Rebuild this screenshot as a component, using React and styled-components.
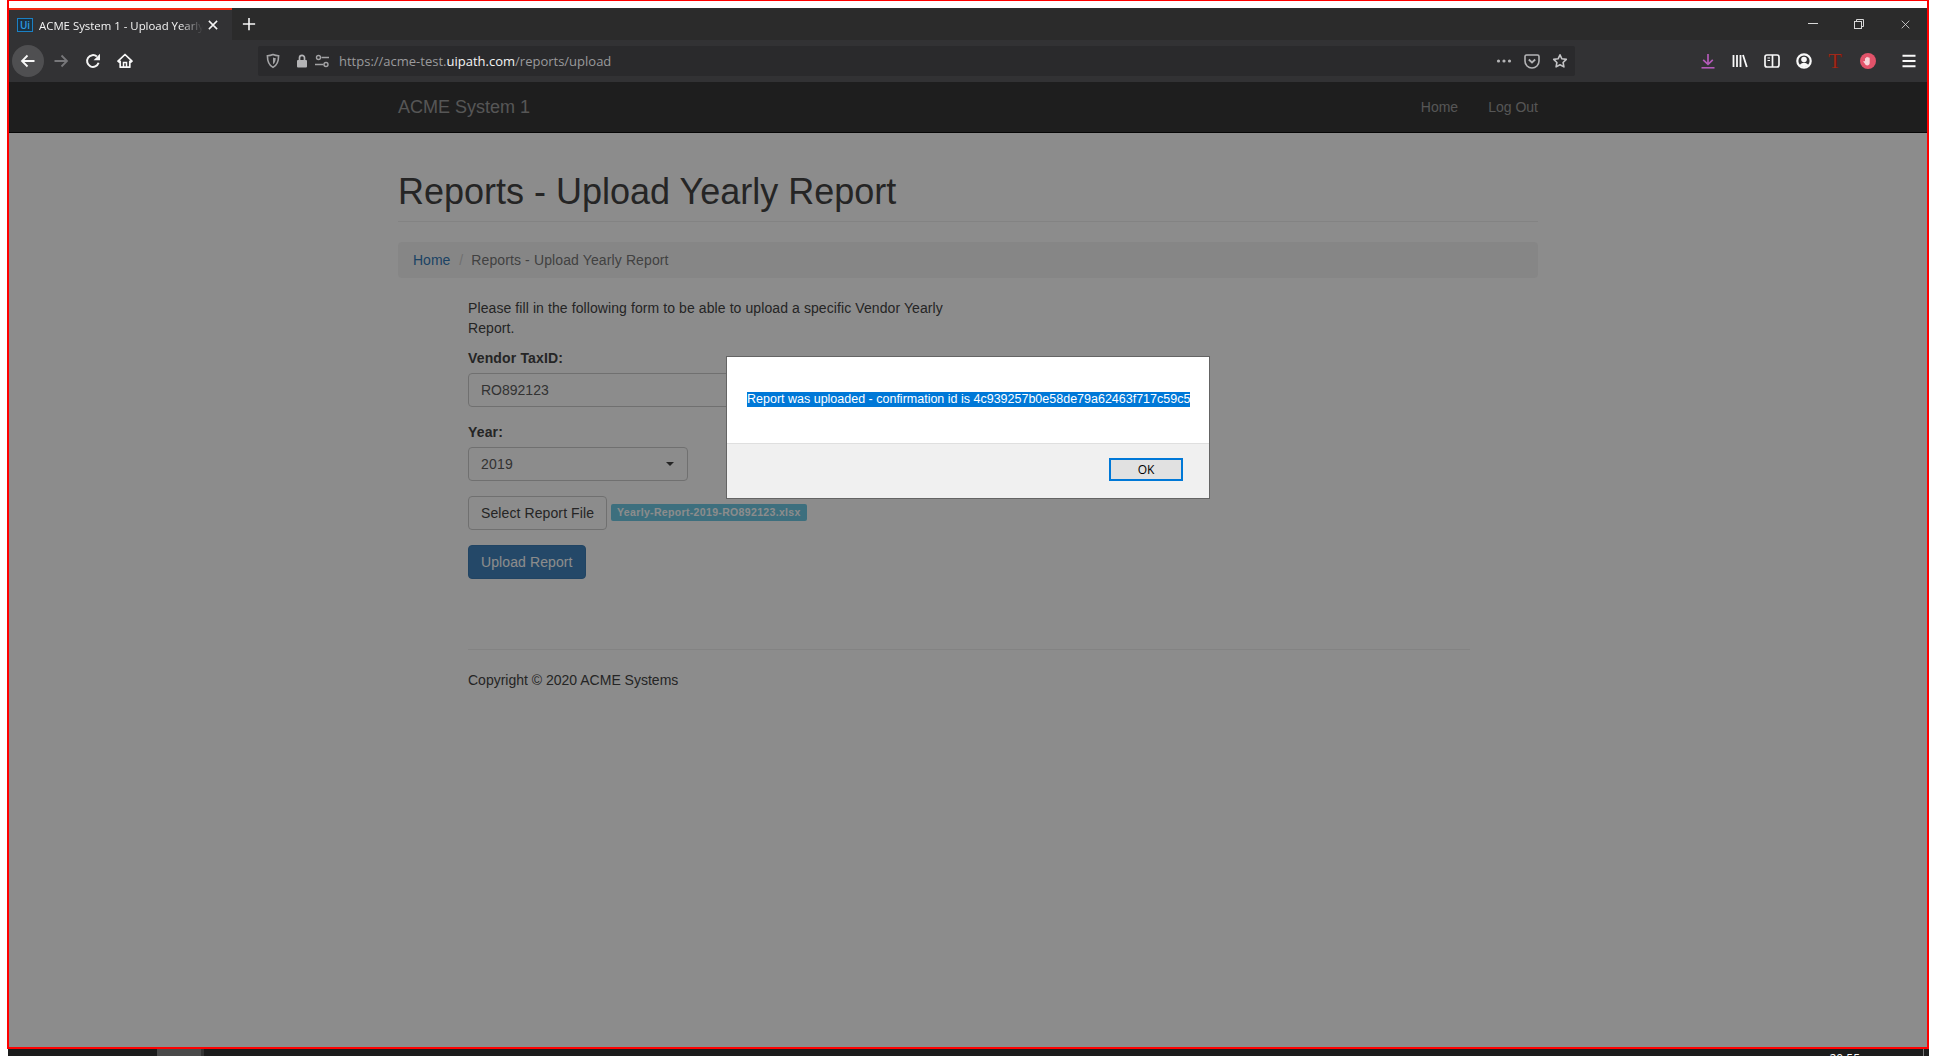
import React from 'react';
import styled, { createGlobalStyle } from 'styled-components';

const GlobalStyle = createGlobalStyle`
  html, body {
    margin: 0;
    padding: 0;
    background: #ffffff;
    overflow: hidden;
  }
  * {
    box-sizing: border-box;
  }
`

const Screen = styled.div`
  width: 1936px;
  height: 1056px;
  background: #ffffff;
  overflow: hidden;
  font-family: "Liberation Sans", Arial, sans-serif;
`

const Frame = styled.div`
  display: flex;
  flex-direction: column;
  width: 1922px;
  height: 1049px;
  margin-left: 7px;
  padding-top: 7px;
  border: 2px solid #ff0000;
  border-top-width: 1px;
  background: #ffffff;
`

const TabBar = styled.div`
  display: flex;
  align-items: stretch;
  height: 32px;
  background: #2b2b2b;
`

const Tab = styled.div`
  display: flex;
  align-items: center;
  width: 223px;
  padding: 0 8px;
  border-top: 2px solid #f02c14;
  background: #323234;
`

const Favicon = styled.span`
  display: flex;
  align-items: center;
  justify-content: center;
  width: 16px;
  height: 14px;
  border: 1.5px solid #1b80c4;
  background: #1c3140;
  color: #2c9ae0;
  font-family: "Open Sans", sans-serif;
  font-size: 10px;
  font-weight: 600;
  line-height: 1;
`

const TabTitle = styled.span`
  width: 164px;
  margin-left: 6px;
  overflow: hidden;
  color: #f4f4f4;
  font-family: "Open Sans", sans-serif;
  font-size: 11.4px;
  white-space: nowrap;
  -webkit-mask-image: linear-gradient(to right, #000 86%, transparent 100%);
  mask-image: linear-gradient(to right, #000 86%, transparent 100%);
`

const TabClose = styled.span`
  display: flex;
  margin-left: 4px;
`

const NewTab = styled.span`
  display: flex;
  align-items: center;
  justify-content: center;
  width: 34px;
`

const WindowControls = styled.div`
  display: flex;
  margin-left: auto;
  margin-right: -1px;
`

const WindowButton = styled.span`
  display: flex;
  align-items: center;
  justify-content: center;
  width: 46px;
`

const Toolbar = styled.div`
  display: flex;
  align-items: center;
  height: 42px;
  padding-left: 3px;
  background: #323234;
`

const BackButton = styled.span`
  display: flex;
  align-items: center;
  justify-content: center;
  width: 32px;
  height: 32px;
  margin-right: 1px;
  border-radius: 50%;
  background: #4f4f51;
`

const ToolSlot = styled.span`
  display: flex;
  align-items: center;
  justify-content: center;
  width: 32px;
  height: 32px;
`

const MenuSlot = styled(ToolSlot)`
  margin-left: 9px;
`

const AddressBar = styled.div`
  display: flex;
  align-items: center;
  width: 1317px;
  height: 30px;
  margin: 0 117px;
  padding: 0 5px 0 7px;
  border-radius: 2px;
  background: #2a2a2c;
`

const AddressIcon = styled.span`
  display: flex;
  margin-right: ${(props) => props.$gap}px;
`

const Url = styled.span`
  color: #9a9a9c;
  font-family: "Open Sans", sans-serif;
  font-size: 13px;
  white-space: nowrap;
`

const UrlHost = styled.span`
  color: #f4f4f4;
`

const AddressActions = styled.div`
  display: flex;
  align-items: center;
  gap: 8px;
  margin-left: auto;
`

const AddressAction = styled.span`
  display: flex;
  align-items: center;
  justify-content: center;
  width: 20px;
`

const ExtensionLetter = styled.span`
  margin-right: 2px;
  color: #9e2a1c;
  font-family: "Liberation Serif", serif;
  font-size: 22px;
  line-height: 1;
  text-shadow: 1px 0 0 #4a120c;
`

const PageArea = styled.div`
  position: relative;
  flex: 1;
  display: flex;
  flex-direction: column;
  overflow: hidden;
  background: #ffffff;
  color: #444444;
  font-size: 14px;
  line-height: 20px;
`

const Navbar = styled.nav`
  flex: none;
  height: 51px;
  border-bottom: 1px solid #0c0c0c;
  background: #383838;
`

const NavInner = styled.div`
  display: flex;
  align-items: center;
  justify-content: space-between;
  width: 1140px;
  height: 100%;
  margin: 0 auto;
`

const Brand = styled.span`
  color: #9d9d9d;
  font-size: 18px;
`

const NavLinks = styled.div`
  display: flex;
  gap: 30px;
`

const NavLink = styled.a`
  color: #9d9d9d;
`

const Container = styled.main`
  width: 1140px;
  margin: 0 auto;
`

const PageHeader = styled.header`
  margin: 39px 0 20px;
  padding-bottom: 9px;
  border-bottom: 1px solid #eeeeee;
`

const Title = styled.h1`
  margin: 0;
  font-size: 36px;
  font-weight: 500;
  line-height: 40px;
`

const Breadcrumb = styled.div`
  display: flex;
  height: 36px;
  margin-bottom: 20px;
  padding: 8px 15px;
  border-radius: 4px;
  background: #f5f5f5;
  color: #777777;
`

const CrumbLink = styled.a`
  color: #337ab7;
`

const CrumbDivider = styled.span`
  padding: 0 8px 0 9px;
  color: #cccccc;
`

const CrumbCurrent = styled.span`
  letter-spacing: 0.12px;
`

const Content = styled.section`
  width: 1002px;
  margin-left: 70px;
`

const Intro = styled.p`
  width: 490px;
  margin: 0 0 10px;
  letter-spacing: 0.09px;
`

const FormGroup = styled.div`
  margin-bottom: 15px;
`

const Label = styled.label`
  display: block;
  margin-bottom: 5px;
  font-weight: 700;
  letter-spacing: 0.15px;
`

const TextInput = styled.input`
  display: block;
  width: 300px;
  height: 34px;
  padding: 6px 12px;
  border: 1px solid #cccccc;
  border-radius: 4px;
  background: #ffffff;
  color: #5c5c5c;
  font-family: inherit;
  font-size: 14px;
`

const SelectBox = styled.div`
  display: flex;
  align-items: center;
  justify-content: space-between;
  width: 220px;
  height: 34px;
  padding: 0 13px 0 12px;
  border: 1px solid #cccccc;
  border-radius: 4px;
  background: #ffffff;
  color: #5c5c5c;
  letter-spacing: 0.2px;
`

const Caret = styled.span`
  width: 0;
  height: 0;
  border-top: 4px solid #444444;
  border-left: 4px solid transparent;
  border-right: 4px solid transparent;
`

const FileRow = styled.div`
  display: flex;
  align-items: flex-start;
  gap: 4px;
  margin-bottom: 15px;
`

const Button = styled.button`
  height: 34px;
  padding: 6px 12px;
  border: 1px solid ${(props) => (props.$primary ? '#3d7db5' : '#cccccc')};
  border-radius: 4px;
  background: ${(props) => (props.$primary ? '#4284bd' : '#ffffff')};
  color: ${(props) => (props.$primary ? '#ffffff' : '#444444')};
  font-family: inherit;
  font-size: 14px;
  letter-spacing: 0.1px;
  line-height: 20px;
`

const Badge = styled.span`
  margin-top: 8px;
  padding: 3px 6px;
  border-radius: 2px;
  background: #70cbe6;
  color: #ffffff;
  font-size: 10.5px;
  font-weight: 700;
  letter-spacing: 0.34px;
  line-height: 11px;
`

const Footer = styled.footer`
  margin-top: 70px;
  padding-top: 20px;
  border-top: 1px solid #eeeeee;
`

const Overlay = styled.div`
  position: absolute;
  inset: 0;
  display: flex;
  justify-content: center;
  align-items: flex-start;
  padding-top: 274px;
  background: rgba(0, 0, 0, 0.45);
`

const Dialog = styled.div`
  display: flex;
  flex-direction: column;
  width: 484px;
  height: 143px;
  border: 1px solid #646464;
  background: #ffffff;
`

const DialogBody = styled.div`
  flex: none;
  display: flex;
  align-items: flex-start;
  height: 86px;
  padding: 35px 20px 0;
`

const Selected = styled.span`
  background: #0078d7;
  color: #ffffff;
  font-size: 12.5px;
  line-height: 15px;
  white-space: nowrap;
`

const DialogFooter = styled.div`
  flex: 1;
  display: flex;
  justify-content: flex-end;
  padding: 14px 26px 0 0;
  border-top: 1px solid #dfdfdf;
  background: #f0f0f0;
`

const OkButton = styled.button`
  width: 74px;
  height: 23px;
  padding: 0;
  border: 2px solid #0078d7;
  background: #e1e1e1;
  color: #000000;
  font-family: "Open Sans", sans-serif;
  font-size: 12px;
  line-height: 1;
`

const Taskbar = styled.div`
  display: flex;
  width: 1921px;
  height: 7px;
  margin-left: 8px;
  padding-left: 149px;
  overflow: hidden;
  background: #1c1c1c;
`

const TaskItem = styled.span`
  width: 47px;
  border-right: 3px solid #333333;
  background: #4a4a4a;
`

const Clock = styled.span`
  margin: 2px 0 0 auto;
  color: #ffffff;
  font-family: "Open Sans", sans-serif;
  font-size: 12px;
  line-height: 16px;
`

const ClockEdge = styled.span`
  width: 1px;
  margin: 0 5px 0 63px;
  background: #777777;
`

const Svg = ({ size = 16, children }) => (
  <svg width={size} height={size} viewBox="0 0 16 16" fill="none" aria-hidden="true">{children}</svg>
)

const ArrowIcon = ({ color, flip }) => (
  <Svg>
    <path
      d={flip ? 'M1.5 8h12.5M8.5 2.5 14 8l-5.5 5.5' : 'M14.5 8H2M7.5 2.5 2 8l5.5 5.5'}
      stroke={color}
      strokeWidth="1.8"
    />
  </Svg>
)

const ReloadIcon = () => (
  <Svg>
    <path d="M13.6 9.8A5.9 5.9 0 1 1 11.9 3.6" stroke="#f4f4f4" strokeWidth="2" />
    <path d="M15 0.8v6.4H8.6z" fill="#f4f4f4" />
  </Svg>
)

const HomeIcon = () => (
  <Svg>
    <path d="M8 1.5 1 8.2l1.2 1 1-.9v5.9h9.6V8.3l1 .9 1.2-1z" stroke="#f8f8f8" strokeWidth="1.7" strokeLinejoin="round" />
    <path d="M6.5 14.2V9.5h3v4.7" stroke="#f8f8f8" strokeWidth="1.5" />
  </Svg>
)

const ShieldIcon = () => (
  <Svg>
    <path d="M8 1.6c2 .9 3.9 1.2 5.6 1.2 0 6-1.6 9.6-5.6 11.6C4 12.4 2.4 8.8 2.4 2.8 4.1 2.8 6 2.5 8 1.6z" stroke="#a3a3a5" strokeWidth="1.6" />
    <path d="M8 4.4c.9.4 1.8.6 2.7.6 0 3-.8 5-2.7 6.2z" fill="#a3a3a5" />
  </Svg>
)

const LockIcon = () => (
  <Svg>
    <path d="M5.5 7V4.8a2.5 2.5 0 0 1 5 0V7" stroke="#b4b4b6" strokeWidth="1.7" />
    <rect x="3" y="7" width="10" height="7.5" rx="1" fill="#b4b4b6" />
  </Svg>
)

const PermissionsIcon = () => (
  <Svg>
    <circle cx="4.5" cy="4.5" r="2" stroke="#a3a3a5" strokeWidth="1.4" />
    <path d="M7.5 4.5H15M1 11.5h8.5" stroke="#a3a3a5" strokeWidth="1.6" />
    <circle cx="12" cy="11.5" r="2" stroke="#a3a3a5" strokeWidth="1.4" />
  </Svg>
)

const DotsIcon = () => (
  <Svg>
    <circle cx="2.5" cy="8" r="1.6" fill="#b4b4b6" />
    <circle cx="8" cy="8" r="1.6" fill="#b4b4b6" />
    <circle cx="13.5" cy="8" r="1.6" fill="#b4b4b6" />
  </Svg>
)

const PocketIcon = () => (
  <Svg>
    <path d="M2.5 2h11A1.5 1.5 0 0 1 15 3.5V8A7 7 0 0 1 1 8V3.5A1.5 1.5 0 0 1 2.5 2z" stroke="#b4b4b6" strokeWidth="1.6" />
    <path d="M4.8 6.5 8 9.5l3.2-3" stroke="#b4b4b6" strokeWidth="1.8" />
  </Svg>
)

const StarIcon = () => (
  <Svg>
    <path d="m8 1.8 1.9 4 4.4.6-3.2 3.1.8 4.4L8 11.8l-3.9 2.1.8-4.4-3.2-3.1 4.4-.6z" stroke="#c4c4c6" strokeWidth="1.6" strokeLinejoin="round" />
  </Svg>
)

const DownloadIcon = () => (
  <Svg>
    <path d="M8 1v10M3.2 6.8 8 11.3l4.8-4.5" stroke="#b35ab8" strokeWidth="1.7" />
    <path d="M1.5 14.8h13" stroke="#b35ab8" strokeWidth="1.6" />
  </Svg>
)

const LibraryIcon = () => (
  <Svg>
    <path d="M1.5 2v12M5 2v12M8.5 2v12M11 2l3.8 12" stroke="#f8f8f8" strokeWidth="1.8" />
  </Svg>
)

const SidebarIcon = () => (
  <Svg>
    <rect x="1" y="2" width="14" height="12" rx="2" stroke="#f8f8f8" strokeWidth="1.7" />
    <path d="M8.5 2v12" stroke="#f8f8f8" strokeWidth="1.7" />
    <path d="M3.5 5H6M3.5 7.5H6" stroke="#f8f8f8" strokeWidth="1.2" />
  </Svg>
)

const AccountIcon = () => (
  <Svg>
    <circle cx="8" cy="8" r="6.7" stroke="#f8f8f8" strokeWidth="2.2" />
    <circle cx="8" cy="6.5" r="2.8" fill="#f8f8f8" />
    <path d="M3.5 12.5c1-2 2.5-2.8 4.5-2.8s3.5.8 4.5 2.8L8 14.5z" fill="#f8f8f8" />
  </Svg>
)

const BlockerIcon = () => (
  <Svg>
    <circle cx="8" cy="8" r="8" fill="#e2536a" />
    <path d="M5 8.2V5.6c0-.9 1.1-.9 1.1 0v-.9c0-.9 1.2-.9 1.2 0v-.3c0-.9 1.2-.9 1.2 0v.8c0-.8 1.2-.8 1.2 0v4.5c0 1.7-1 2.7-2.500 2.7-1.200 0-1.800-.6-2.300-1.600L3.500 9c-.4-.8.5-1.300 1-.7z" fill="#f7d4d9" />
  </Svg>
)

const MenuIcon = () => (
  <Svg>
    <path d="M1.5 2.800h13M1.500 8h13M1.500 13.200h13" stroke="#f8f8f8" strokeWidth="2" />
  </Svg>
)

const CloseIcon = ({ size, color, width }) => (
  <Svg size={size}>
    <path d="M2.5 2.5l11 11M13.5 2.5l-11 11" stroke={color} strokeWidth={width} />
  </Svg>
)

const PlusIcon = () => (
  <Svg size={14}>
    <path d="M8 1v14M1 8h14" stroke="#f8f8f8" strokeWidth="1.8" />
  </Svg>
)

const MinimizeIcon = () => (
  <svg width="10" height="10" viewBox="0 0 10 10" fill="none" aria-hidden="true">
    <path d="M0 4.5h10" stroke="#d8d8d8" />
  </svg>
)

const RestoreIcon = () => (
  <svg width="10" height="10" viewBox="0 0 10 10" fill="none" aria-hidden="true">
    <path d="M2.5 2.500V.5h7v7h-2" stroke="#d8d8d8" />
    <rect x=".5" y="2.5" width="7" height="7" stroke="#d8d8d8" />
  </svg>
)

const BrowserChrome = () => (
  <>
    <TabBar>
      <Tab>
        <Favicon>Ui</Favicon>
        <TabTitle>ACME System 1 - Upload Yearly Report</TabTitle>
        <TabClose><CloseIcon size={12} color="#f4f4f4" width={2} /></TabClose>
      </Tab>
      <NewTab><PlusIcon /></NewTab>
      <WindowControls>
        <WindowButton><MinimizeIcon /></WindowButton>
        <WindowButton><RestoreIcon /></WindowButton>
        <WindowButton><CloseIcon size={11} color="#d8d8d8" width={1.2} /></WindowButton>
      </WindowControls>
    </TabBar>
    <Toolbar>
      <BackButton><ArrowIcon color="#f8f8f8" /></BackButton>
      <ToolSlot><ArrowIcon color="#77777a" flip /></ToolSlot>
      <ToolSlot><ReloadIcon /></ToolSlot>
      <ToolSlot><HomeIcon /></ToolSlot>
      <AddressBar>
        <AddressIcon $gap={13}><ShieldIcon /></AddressIcon>
        <AddressIcon $gap={4}><LockIcon /></AddressIcon>
        <AddressIcon $gap={9}><PermissionsIcon /></AddressIcon>
        <Url>https://acme-test.<UrlHost>uipath.com</UrlHost>/reports/upload</Url>
        <AddressActions>
          <AddressAction><DotsIcon /></AddressAction>
          <AddressAction><PocketIcon /></AddressAction>
          <AddressAction><StarIcon /></AddressAction>
        </AddressActions>
      </AddressBar>
      <ToolSlot><DownloadIcon /></ToolSlot>
      <ToolSlot><LibraryIcon /></ToolSlot>
      <ToolSlot><SidebarIcon /></ToolSlot>
      <ToolSlot><AccountIcon /></ToolSlot>
      <ToolSlot><ExtensionLetter>T</ExtensionLetter></ToolSlot>
      <ToolSlot><BlockerIcon /></ToolSlot>
      <MenuSlot><MenuIcon /></MenuSlot>
    </Toolbar>
  </>
)

const App = () => {
  return (
    <Screen>
      <GlobalStyle />
      <Frame>
        <BrowserChrome />
        <PageArea>
          <Navbar>
            <NavInner>
              <Brand>ACME System 1</Brand>
              <NavLinks>
                <NavLink>Home</NavLink>
                <NavLink>Log Out</NavLink>
              </NavLinks>
            </NavInner>
          </Navbar>
          <Container>
            <PageHeader>
              <Title>Reports - Upload Yearly Report</Title>
            </PageHeader>
            <Breadcrumb>
              <CrumbLink>Home</CrumbLink>
              <CrumbDivider>/</CrumbDivider>
              <CrumbCurrent>Reports - Upload Yearly Report</CrumbCurrent>
            </Breadcrumb>
            <Content>
              <Intro>Please fill in the following form to be able to upload a specific Vendor Yearly Report.</Intro>
              <FormGroup>
                <Label htmlFor="taxId">Vendor TaxID:</Label>
                <TextInput id="taxId" readOnly value="RO892123" />
              </FormGroup>
              <FormGroup>
                <Label>Year:</Label>
                <SelectBox>
                  2019
                  <Caret />
                </SelectBox>
              </FormGroup>
              <FileRow>
                <Button>Select Report File</Button>
                <Badge>Yearly-Report-2019-RO892123.xlsx</Badge>
              </FileRow>
              <Button $primary>Upload Report</Button>
              <Footer>Copyright © 2020 ACME Systems</Footer>
            </Content>
          </Container>
          <Overlay>
            <Dialog>
              <DialogBody>
                <Selected>Report was uploaded - confirmation id is 4c939257b0e58de79a62463f717c59c5</Selected>
              </DialogBody>
              <DialogFooter>
                <OkButton>OK</OkButton>
              </DialogFooter>
            </Dialog>
          </Overlay>
        </PageArea>
      </Frame>
      <Taskbar>
        <TaskItem />
        <Clock>20:55</Clock>
        <ClockEdge />
      </Taskbar>
    </Screen>
  )
}

export default App;
